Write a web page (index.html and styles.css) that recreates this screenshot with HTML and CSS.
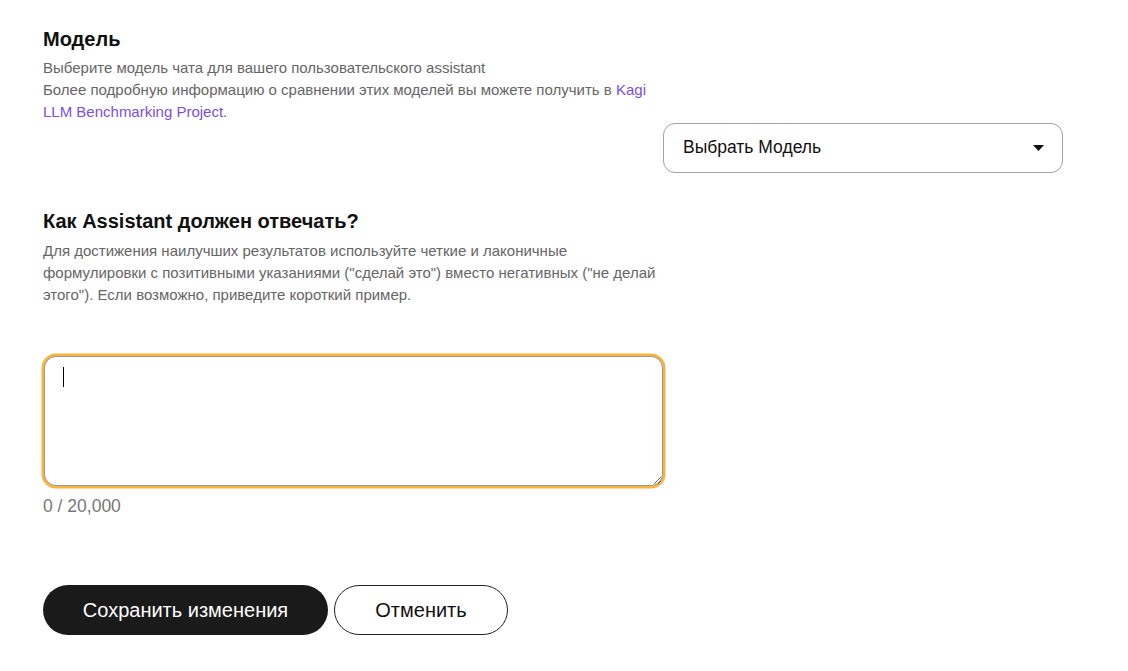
FILE: index.html
```html
<!DOCTYPE html>
<html lang="ru">
<head>
<meta charset="utf-8">
<title>Assistant</title>
<link rel="stylesheet" href="styles.css">
</head>
<body>
<div class="page">
  <section class="model">
    <div class="model-text">
      <h2 class="title">Модель</h2>
      <p class="desc">Выберите модель чата для вашего пользовательского assistant<br>Более подробную информацию о сравнении этих моделей вы можете получить в <a class="link" href="#">Kagi</a> <a class="link" href="#">LLM Benchmarking Project</a>.</p>
    </div>
    <div class="select">
      <span>Выбрать Модель</span>
      <svg class="caret" width="11" height="6" viewBox="0 0 11 6"><path d="M0 0 H11 L5.5 6 Z" fill="#111"/></svg>
    </div>
  </section>
  <section class="answer">
    <h2 class="title">Как Assistant должен отвечать?</h2>
    <p class="desc">Для достижения наилучших результатов используйте четкие и лаконичные формулировки с позитивными указаниями ("сделай это") вместо негативных ("не делай этого"). Если возможно, приведите короткий пример.</p>
    <div class="box-wrap">
      <textarea class="box"></textarea>
      <span class="cursor"></span>
    </div>
    <div class="count">0 / 20,000</div>
  </section>
  <div class="actions">
    <button class="btn primary">Сохранить изменения</button>
    <button class="btn secondary">Отменить</button>
  </div>
</div>
</body>
</html>
```
FILE: styles.css
```css
* { box-sizing: border-box; }
body {
  margin: 0;
  background: #fff;
  font-family: "Liberation Sans", Arial, sans-serif;
  color: #111;
}
.page {
  padding: 27px 43px 0;
  width: 1106px;
}
.model {
  display: grid;
  grid-template-columns: 620px 400px;
}
.model-text { grid-column: 1; }
.title {
  margin: 0;
  font-size: 20px;
  line-height: 24px;
  font-weight: bold;
  color: #111;
}
.desc {
  margin: 6px 0 0;
  font-size: 15px;
  line-height: 22px;
  color: #666;
}
.link { color: #7b4fe0; text-decoration: none; }
.select {
  grid-column: 2;
  grid-row: 2;
  height: 50px;
  border: 1px solid #a3a3a3;
  border-radius: 12px;
  display: flex;
  align-items: center;
  justify-content: space-between;
  padding: 0 18px 1px 19px;
  font-size: 17.5px;
  color: #111;
}
.answer {
  width: 620px;
  margin-top: 36px;
}
.answer .desc { margin-top: 7px; }
.box-wrap {
  position: relative;
  margin: 50px 0 0 1px;
  width: 619px;
}
.box {
  display: block;
  width: 619px;
  height: 130px;
  border: 1px solid #999;
  border-radius: 12px;
  box-shadow: 0 0 0 2.5px #f9b43c;
  outline: none;
  padding: 10px 18px;
  font-family: "Liberation Sans", Arial, sans-serif;
  font-size: 16px;
  resize: vertical;
}
.cursor {
  position: absolute;
  left: 19px;
  top: 11px;
  width: 1px;
  height: 20px;
  background: #000;
}
.count {
  margin-top: 10px;
  font-size: 17.5px;
  line-height: 20px;
  color: #777;
}
.actions {
  display: flex;
  gap: 6px;
  margin-top: 69px;
}
.btn {
  height: 50px;
  border-radius: 25px;
  font-family: "Liberation Sans", Arial, sans-serif;
  font-size: 20px;
  cursor: pointer;
}
.primary {
  width: 285px;
  background: #1a1a1a;
  color: #fff;
  border: none;
}
.secondary {
  width: 174px;
  background: #fff;
  color: #111;
  border: 1px solid #222;
}
```
